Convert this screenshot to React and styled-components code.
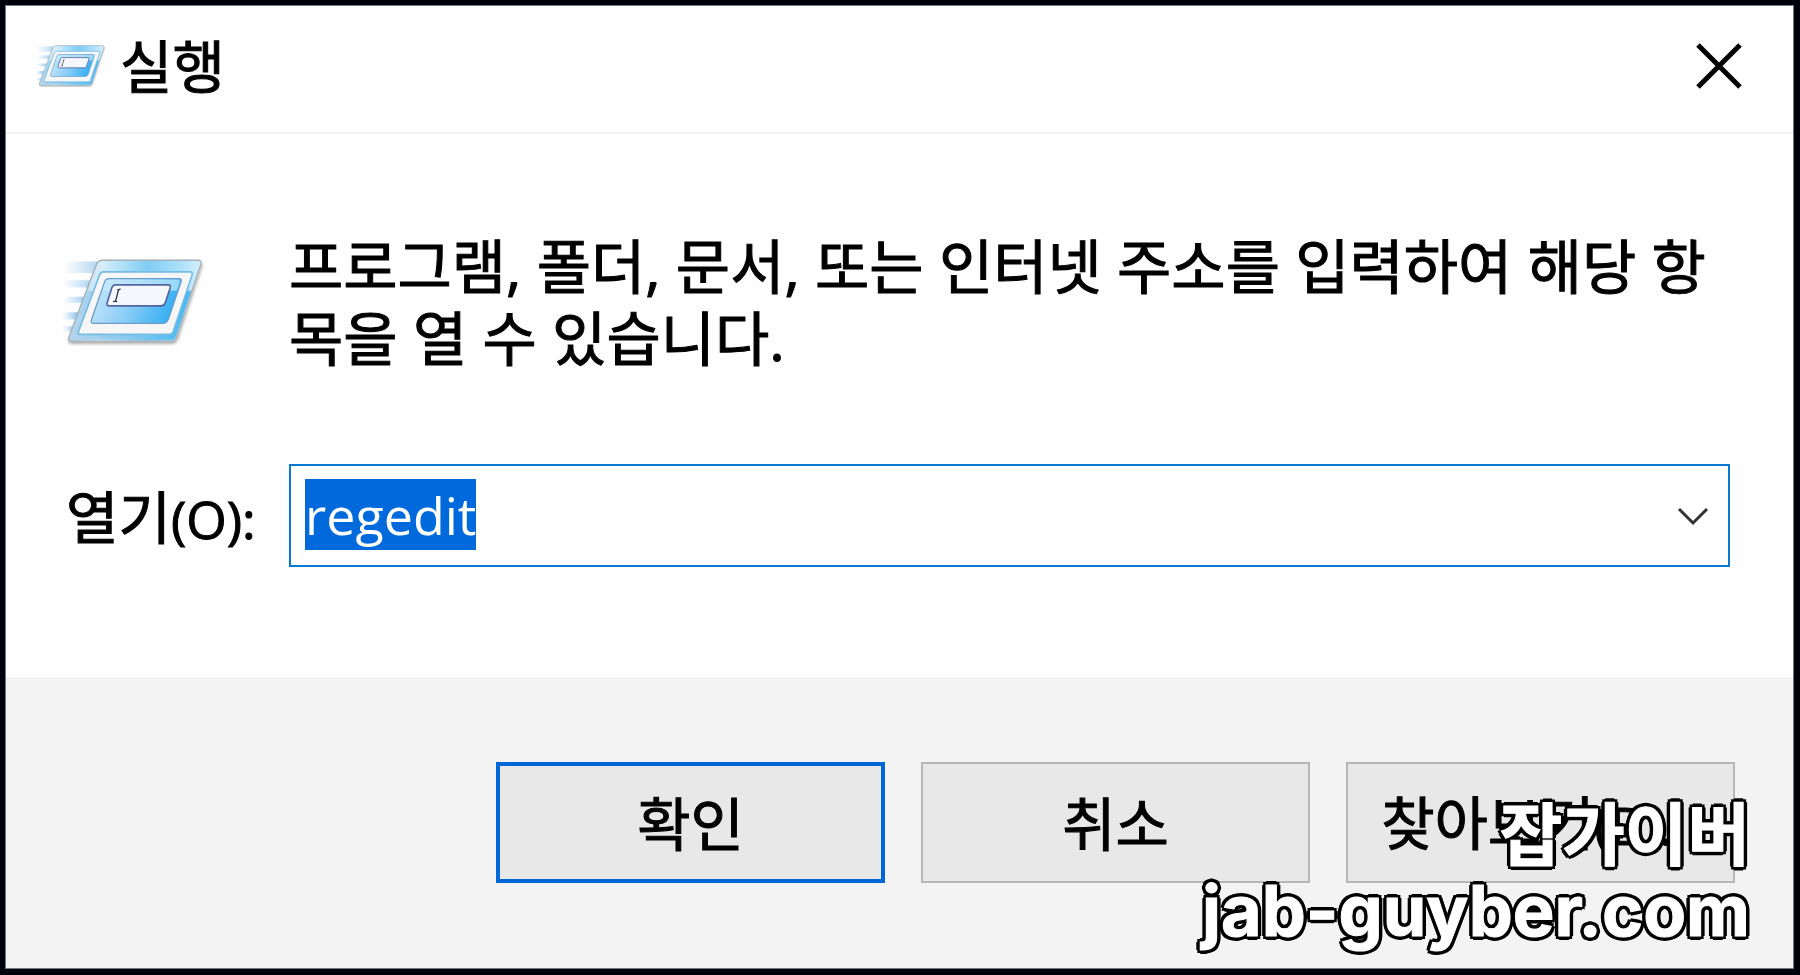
import React, { useEffect, useRef, useState } from "react";
import styled, { createGlobalStyle } from "styled-components";

const GlobalStyle = createGlobalStyle`
  * {
    box-sizing: border-box;
  }
  body {
    margin: 0;
    background: #000;
    color: #000;
    font-family: "Open Sans", "Noto Sans CJK KR", sans-serif;
    font-size: 59px;
    line-height: 72px;
    -webkit-text-stroke: 1px currentColor;
  }
  button,
  input {
    font: inherit;
    color: inherit;
  }
`;

const Screen = styled.div`
  position: relative;
  display: flex;
  min-height: 100vh;
  padding: 5px 6px 6px 5px;
  background: #00000c;
`;

const Dialog = styled.main`
  display: flex;
  flex-direction: column;
  flex-grow: 1;
  border: 1px solid #747884;
  background: #fefefe;
`;

const TitleBar = styled.header`
  display: flex;
  align-items: center;
  gap: 14px;
  height: 128px;
  padding: 0 42px 6px 30px;
  border-bottom: 2px solid #f2f2f2;
`;

const Title = styled.h1`
  flex-grow: 1;
  margin: 0;
  font-size: 57px;
  font-weight: 400;
`;

const IconButton = styled.button`
  display: flex;
  align-items: center;
  justify-content: center;
  width: ${({ $width }) => $width};
  height: 64px;
  padding: 0;
  border: 0;
  background: transparent;
`;

const Content = styled.form`
  display: flex;
  flex-direction: column;
  flex-grow: 1;
`;

const Fields = styled.div`
  display: grid;
  grid-template-columns: 227px 1fr;
  align-items: center;
  row-gap: 90px;
  flex-grow: 1;
  align-content: start;
  padding: 96px 63px 64px 56px;
`;

const Description = styled.p`
  margin: 0;
`;

const Label = styled.label`
  padding: 4px 0 0 4px;
  font-size: 57px;
  white-space: nowrap;
`;

const Latin = styled.span`
  font-size: 52px;
`;

const ComboBox = styled.div`
  display: flex;
  align-items: center;
  height: 103px;
  padding: 0 9px 0 14px;
  border: 2px solid #0a7ad1;
  background: #fff;
`;

const TextInput = styled.input`
  flex-grow: 1;
  min-width: 0;
  height: 99px;
  padding: 12px 0 15px;
  border: 0;
  outline: 0;
  background: transparent;
  font-size: 52px;
  line-height: 72px;
  &::selection {
    background: #006adc;
    color: #fff;
  }
`;

const Footer = styled.footer`
  display: flex;
  justify-content: flex-end;
  gap: 36px;
  padding: 85px 58px 85px;
  background: #f3f3f3;
`;

const Button = styled.button`
  width: 389px;
  height: 121px;
  padding: 2px 0 0;
  border: ${({ $primary }) =>
    $primary ? "4px solid #0067d8" : "2px solid #b6b6b6"};
  background: #e8e8e8;
  font-size: 58px;
  white-space: nowrap;
`;

const Watermark = styled.div`
  position: absolute;
  right: 50px;
  bottom: 26px;
  color: #fff;
  font-family: Inter, "Noto Sans CJK KR", sans-serif;
  font-weight: 700;
  line-height: 76px;
  text-align: right;
  -webkit-text-stroke: 1px #fff;
  text-shadow:
    3px 0 #000,
    -3px 0 #000,
    0 3px #000,
    0 -3px #000,
    3px 3px #000,
    -3px 3px #000,
    3px -3px #000,
    -3px -3px #000,
    4px 0 #000,
    -4px 0 #000,
    0 4px #000,
    0 -4px #000;
  pointer-events: none;
`;

const WatermarkLine = styled.div`
  font-size: ${({ $size }) => $size};
`;

const RunIcon = ({ id, width, height }) => (
  <svg width={width} height={height} viewBox="40 80 430 275" aria-hidden="true">
    <defs>
      <linearGradient id={`${id}-frame`} x1="0" y1="0" x2="1" y2="0">
        <stop offset="0" stopColor="#b4d4ea" />
        <stop offset="0.25" stopColor="#d8eef9" />
        <stop offset="0.6" stopColor="#7fcdf5" />
        <stop offset="0.85" stopColor="#aee0fa" />
        <stop offset="1" stopColor="#d5effc" />
      </linearGradient>
      <linearGradient id={`${id}-low`} x1="0" y1="0" x2="1" y2="0">
        <stop offset="0" stopColor="#b5d5ed" />
        <stop offset="0.5" stopColor="#86c9ee" />
        <stop offset="1" stopColor="#43b7f3" />
      </linearGradient>
      <linearGradient id={`${id}-inner`} x1="0" y1="0.4" x2="1" y2="0.6">
        <stop offset="0" stopColor="#c5e4f8" />
        <stop offset="0.45" stopColor="#8acdf7" />
        <stop offset="1" stopColor="#28aaf2" />
      </linearGradient>
      <linearGradient id={`${id}-speed`} x1="0" y1="0" x2="1" y2="0">
        <stop offset="0" stopColor="#9bcdf4" stopOpacity="0" />
        <stop offset="1" stopColor="#86bfea" />
      </linearGradient>
      <filter id={`${id}-shadow`} x="-10%" y="-10%" width="120%" height="125%">
        <feDropShadow dx="2" dy="6" stdDeviation="4" floodOpacity="0.35" />
      </filter>
      <filter id={`${id}-soft`} x="-10%" y="-60%" width="120%" height="220%">
        <feGaussianBlur stdDeviation="2" />
      </filter>
    </defs>
    <g fill={`url(#${id}-speed)`} filter={`url(#${id}-soft)`}>
      <path d="M44 96H150L138 130H50V116L44 108Z" opacity="0.65" />
      <path d="M44 152H130L122 174H44Z" opacity="0.7" />
      <path d="M44 202H110L104 220H44Z" opacity="0.8" />
      <path d="M40 248H92L82 270H40Z" />
      <path d="M40 290H76L70 306H40Z" opacity="0.7" />
    </g>
    <path
      d="M163 92H448Q461 92 457 105L384 324Q380 335 368 335H68Q56 335 61 323L143 106Q148 92 163 92Z"
      fill={`url(#${id}-frame)`}
      stroke="#a3b1b8"
      strokeWidth="4"
      filter={`url(#${id}-shadow)`}
    />
    <path
      d="M116 184H428L382 321Q379 331 367 331H71Q62 331 65 322Z"
      fill={`url(#${id}-low)`}
    />
    <path
      d="M165 127H424Q434 127 431 137L374 307Q371 315 362 315H95Q86 315 90 305L153 136Q156 127 165 127Z"
      fill="#f7f6f7"
      stroke="#76bde3"
      strokeWidth="5"
    />
    <path
      d="M181 147H391Q401 147 398 157L360 269Q355 282 343 282H134Q125 282 129 270L168 157Q171 147 181 147Z"
      fill={`url(#${id}-inner)`}
      stroke="#6c9dc9"
      strokeWidth="4"
    />
    <path
      d="M184 150H389Q396 150 394 157L385 184H161L171 157Q173 150 184 150Z"
      fill="#c9ecfd"
      opacity="0.65"
    />
    <path
      d="M201 166H360Q368 166 365 176L350 221Q347 229 338 229H182Q173 229 176 219L190 175Q193 166 201 166Z"
      fill="#f4f8fd"
      stroke="#52659d"
      strokeWidth="5"
    />
    <path
      d="M206 181H210L216 178M210 181L201 215M194 216L201 215L206 217"
      fill="none"
      stroke="#303238"
      strokeWidth="4"
    />
  </svg>
);

const App = () => {
  const [command, setCommand] = useState("regedit");
  const inputRef = useRef(null);

  useEffect(() => {
    inputRef.current.focus();
    inputRef.current.select();
  }, []);

  return (
    <>
      <GlobalStyle />
      <Screen>
        <Dialog>
          <TitleBar>
            <RunIcon id="small" width={70} height={46} />
            <Title>실행</Title>
            <IconButton type="button" $width="64px" aria-label="닫기">
              <svg width="46" height="46" viewBox="0 0 46 46">
                <path
                  d="M2 2L44 44M44 2L2 44"
                  fill="none"
                  stroke="#000"
                  strokeWidth="5"
                />
              </svg>
            </IconButton>
          </TitleBar>
          <Content onSubmit={(e) => e.preventDefault()}>
            <Fields>
              <RunIcon id="large" width={143} height={92} />
              <Description>
                프로그램, 폴더, 문서, 또는 인터넷 주소를 입력하여 해당 항목을 열
                수 있습니다.
              </Description>
              <Label htmlFor="command">
                열기<Latin>(O):</Latin>
              </Label>
              <ComboBox>
                <TextInput
                  id="command"
                  type="text"
                  autoComplete="off"
                  spellCheck={false}
                  ref={inputRef}
                  value={command}
                  onChange={(e) => setCommand(e.target.value)}
                />
                <IconButton type="button" $width="52px" aria-label="목록 열기">
                  <svg width="32" height="20" viewBox="0 0 32 20">
                    <path
                      d="M2 3L16 17L30 3"
                      fill="none"
                      stroke="#333"
                      strokeWidth="3"
                    />
                  </svg>
                </IconButton>
              </ComboBox>
            </Fields>
            <Footer>
              <Button type="submit" $primary>
                확인
              </Button>
              <Button type="button">취소</Button>
              <Button type="button">
                찾아보기<Latin>(B)...</Latin>
              </Button>
            </Footer>
          </Content>
        </Dialog>
        <Watermark>
          <WatermarkLine $size="68px">잡가이버</WatermarkLine>
          <WatermarkLine $size="70px">jab-guyber.com</WatermarkLine>
        </Watermark>
      </Screen>
    </>
  );
};

export default App;
